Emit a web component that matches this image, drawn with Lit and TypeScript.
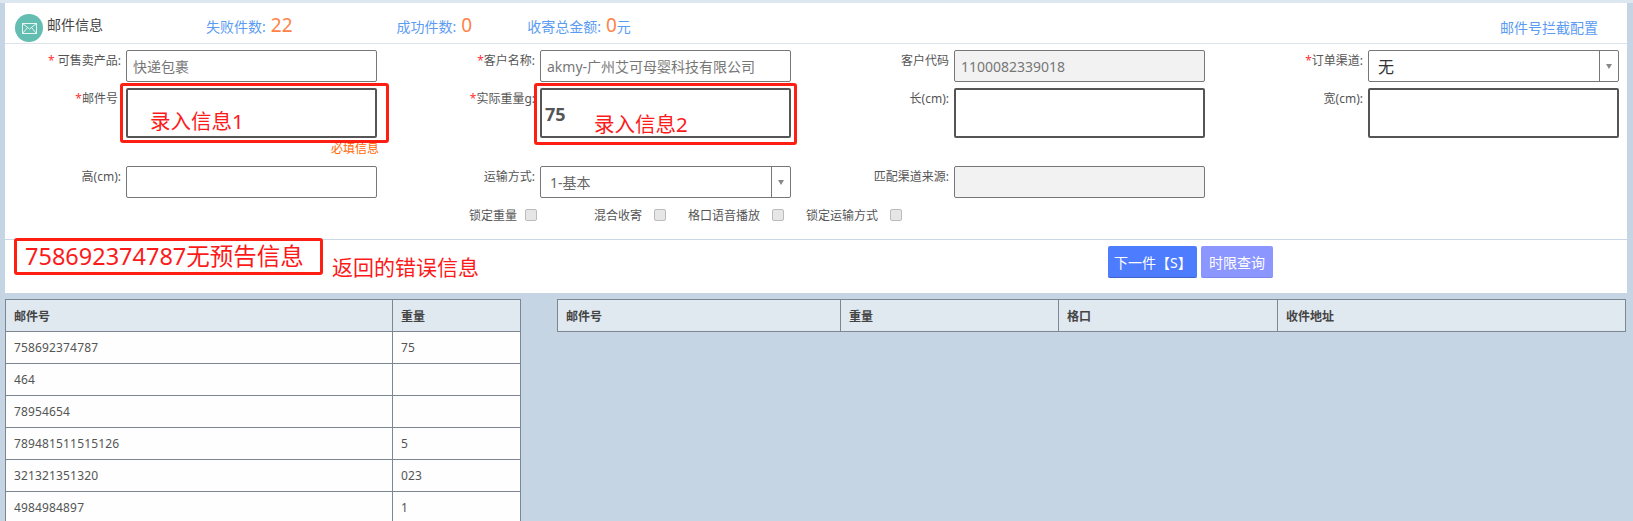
import { css, html, LitElement } from 'lit';
import { customElement } from 'lit/decorators.js';

interface Field {
    label: string;
    star?: string;
    value?: string;
    kind?: 'plain' | 'thick' | 'off' | 'select';
    strong?: boolean;
    big?: boolean;
    note?: string;
    tip?: boolean;
}

const FIELDS: Field[] = [
    { label: '可售卖产品:', star: '* ', value: '快递包裹' },
    { label: '客户名称:', star: '*', value: 'akmy-广州艾可母婴科技有限公司' },
    { label: '客户代码', value: '1100082339018', kind: 'off' },
    { label: '订单渠道:', star: '*', value: '无', kind: 'select', big: true },
    { label: '邮件号', star: '*', kind: 'thick', note: '录入信息1', tip: true },
    { label: '实际重量g:', star: '*', value: '75', kind: 'thick', strong: true, note: '录入信息2' },
    { label: '长(cm):', kind: 'thick' },
    { label: '宽(cm):', kind: 'thick' },
    { label: '高(cm):' },
    { label: '运输方式:', value: '1-基本', kind: 'select' },
    { label: '匹配渠道来源:', kind: 'off' },
];

const CHECKS = ['锁定重量', '混合收寄', '格口语音播放', '锁定运输方式'];

const LEFT_ROWS = [
    ['758692374787', '75'],
    ['464', ''],
    ['78954654', ''],
    ['789481511515126', '5'],
    ['321321351320', '023'],
    ['4984984897', '1'],
];

@customElement('app-root')
export class AppRoot extends LitElement {

    static styles = css`
        :host {
            display: block;
            height: 521px;
            overflow: hidden;
            background: #c5d5e4;
            font-family: "Noto Sans", "Noto Sans CJK SC", sans-serif;
            font-size: 12px;
            color: #555;
        }
        .strip {
            height: 3px;
            background: #dde7ef;
        }
        .panel {
            margin: 0 6px 0 5px;
            height: 290px;
            background: #fff;
        }
        .head {
            display: flex;
            align-items: flex-start;
            height: 29px;
            padding: 11px 0 0 10px;
            border-bottom: 1px solid #dde5ec;
        }
        .badge {
            width: 28px;
            height: 28px;
            border-radius: 50%;
            background: #63bdb0;
            display: flex;
            align-items: center;
            justify-content: center;
            flex: none;
        }
        .title {
            margin: 1px 0 0 4px;
            font-size: 14px;
            line-height: 20px;
            color: #444;
            white-space: nowrap;
        }
        .stat {
            margin: 1px 0 0 103px;
            display: flex;
            align-items: baseline;
            font-size: 14px;
            line-height: 20px;
            color: #5b9cf2;
            white-space: nowrap;
        }
        .stat + .stat {
            margin-left: 104px;
        }
        .stat + .stat + .stat {
            margin-left: 55px;
        }
        .stat b {
            margin-left: 5px;
            font-size: 19px;
            font-weight: 400;
            color: #ff8247;
        }
        .link {
            margin: 4px 29px 0 auto;
            font-size: 14px;
            line-height: 20px;
            color: #5b9cf2;
            white-space: nowrap;
        }
        .form {
            display: grid;
            grid-template-columns: 121px 251px 163px 251px 163px 251px 163px 251px;
            grid-auto-rows: min-content;
            row-gap: 6px;
            padding-top: 6px;
        }
        .label {
            padding: 3px 5px 0 0;
            line-height: 16px;
            text-align: right;
            white-space: nowrap;
        }
        .label.hidden-colon {
            padding-right: 8px;
        }
        .star {
            color: #f33;
        }
        .cell {
            position: relative;
        }
        .box {
            box-sizing: border-box;
            display: flex;
            align-items: center;
            height: 32px;
            padding-left: 6px;
            border: 1px solid #777;
            border-radius: 2px;
            background: #fff;
            font-size: 14px;
            color: #777;
        }
        .box.thick {
            height: 50px;
            border: 2px solid #555;
            padding-left: 3px;
        }
        .box.off {
            background: #f2f2f2;
        }
        .box.select {
            padding-left: 9px;
            color: #666;
        }
        .box .val {
            flex: 1;
        }
        .box.big {
            font-size: 16px;
            color: #333;
        }
        .box.strong {
            padding-top: 2px;
            font-size: 18px;
            font-weight: 700;
            color: #555;
        }
        .arrow {
            width: 18px;
            align-self: stretch;
            border-left: 1px solid #777;
            display: flex;
            align-items: center;
            justify-content: center;
        }
        .arrow::after {
            content: "";
            border-top: 5px solid #888;
            border-left: 3px solid transparent;
            border-right: 3px solid transparent;
        }
        .tip {
            margin: 4px -2px 0 0;
            height: 18px;
            line-height: 14px;
            text-align: right;
            color: #f60;
        }
        .mark {
            position: absolute;
            top: -5px;
            box-sizing: border-box;
            height: 60px;
            border: 3px solid #ff1f12;
            border-radius: 3px;
            pointer-events: none;
        }
        .mark.first {
            left: -6px;
            width: 269px;
        }
        .mark.second {
            left: -6px;
            width: 263px;
            height: 62px;
        }
        .note {
            position: absolute;
            font-size: 20.5px;
            line-height: 24px;
            color: #fd1a1a;
            white-space: nowrap;
        }
        .note.first {
            left: 24px;
            top: 21px;
        }
        .note.second {
            left: 54px;
            top: 24px;
        }
        .checks {
            display: flex;
            gap: 22px;
            margin: 11px 0 0 464px;
            height: 12px;
        }
        .check {
            display: flex;
            align-items: center;
            gap: 12px;
            white-space: nowrap;
        }
        .check:first-child {
            gap: 8px;
            margin-right: 35px;
        }
        .tick {
            box-sizing: border-box;
            width: 12px;
            height: 12px;
            border: 1px solid #bbb;
            border-radius: 2px;
            background: #e6e6e6;
        }
        .foot {
            display: flex;
            margin-top: 18px;
            border-top: 1px solid #c8d8e6;
            height: 52px;
            padding-left: 9px;
        }
        .error {
            box-sizing: border-box;
            flex: none;
            width: 309px;
            height: 37px;
            margin-top: -2px;
            padding-left: 8px;
            border: 3px solid #ff1f12;
            border-radius: 3px;
            font-size: 23.5px;
            line-height: 31px;
            color: #fd1a1a;
            white-space: nowrap;
        }
        .reason {
            margin: 15px 0 0 9px;
            font-size: 21px;
            line-height: 24px;
            color: #fd1a1a;
            white-space: nowrap;
        }
        .btn {
            box-sizing: border-box;
            height: 32px;
            margin-top: 6px;
            padding: 0 6px;
            border: 0;
            border-bottom: 1px solid #3d63c8;
            border-radius: 2px;
            background: #4d7cfe;
            font: inherit;
            font-size: 14px;
            color: #fff;
            white-space: nowrap;
        }
        .btn.next {
            width: 89px;
            margin-left: 629px;
        }
        .btn.query {
            width: 72px;
            margin-left: 4px;
            background: #8c96ff;
            border-bottom-color: #7d87ea;
        }
        .tables {
            display: flex;
            align-items: flex-start;
            padding: 6px 7px 0 5px;
        }
        table {
            border-collapse: collapse;
            table-layout: fixed;
            background: #fefefe;
        }
        .left {
            width: 516px;
            margin-right: 36px;
        }
        .right {
            width: 1069px;
        }
        th, td {
            box-sizing: border-box;
            height: 32px;
            padding: 0 8px;
            border: 1px solid #7d8793;
            font-weight: 400;
            text-align: left;
            white-space: nowrap;
        }
        td {
            letter-spacing: 0.15px;
        }
        th {
            background: #e0e8f0;
            font-weight: 700;
            color: #444;
        }
    `;

    renderField(f: Field) {
        const cls = ['box', f.kind ?? '', f.big ? 'big' : '', f.strong ? 'strong' : ''].join(' ');
        return html`
            <div class="label ${f.tip ? 'hidden-colon' : ''}">${f.star ? html`<span class="star">${f.star}</span>` : ''}${f.label}</div>
            <div class="cell">
                <div class=${cls}>
                    <span class="val">${f.value ?? ''}</span>
                    ${f.kind === 'select' ? html`<span class="arrow"></span>` : ''}
                </div>
                ${f.tip ? html`<div class="tip">必填信息</div>` : ''}
                ${f.note ? html`
                    <div class="mark ${f.tip ? 'first' : 'second'}"></div>
                    <div class="note ${f.tip ? 'first' : 'second'}">${f.note}</div>` : ''}
            </div>`;
    }

    render() {
        return html`
            <div class="strip"></div>
            <div class="panel">
                <div class="head">
                    <span class="badge">
                        <svg width="15" height="11" viewBox="0 0 15 11" fill="none" stroke="#e6f5f2" stroke-width="1">
                            <rect x="0.5" y="0.5" width="14" height="10"></rect>
                            <path d="M0.5 0.5 L7.5 6 L14.5 0.5 M0.5 10.5 L5.5 4.5 M14.5 10.5 L9.5 4.5"></path>
                        </svg>
                    </span>
                    <span class="title">邮件信息</span>
                    <span class="stat">失败件数:<b>22</b></span>
                    <span class="stat">成功件数:<b>0</b></span>
                    <span class="stat">收寄总金额:<b>0</b>元</span>
                    <span class="link">邮件号拦截配置</span>
                </div>
                <div class="form">
                    ${FIELDS.map((f) => this.renderField(f))}
                </div>
                <div class="checks">
                    ${CHECKS.map((c) => html`<div class="check">${c}<span class="tick"></span></div>`)}
                </div>
                <div class="foot">
                    <div class="error">758692374787无预告信息</div>
                    <div class="reason">返回的错误信息</div>
                    <button class="btn next">下一件【S】</button>
                    <button class="btn query">时限查询</button>
                </div>
            </div>
            <div class="tables">
                <table class="left">
                    <colgroup><col style="width:387px"><col></colgroup>
                    <tr><th>邮件号</th><th>重量</th></tr>
                    ${LEFT_ROWS.map((r) => html`<tr><td>${r[0]}</td><td>${r[1]}</td></tr>`)}
                </table>
                <table class="right">
                    <colgroup><col style="width:283px"><col style="width:218px"><col style="width:219px"><col></colgroup>
                    <tr><th>邮件号</th><th>重量</th><th>格口</th><th>收件地址</th></tr>
                </table>
            </div>`;
    }
}
